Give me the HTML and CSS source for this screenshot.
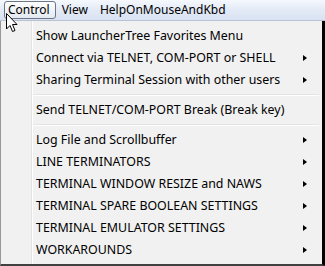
FILE: index.html
```html
<!DOCTYPE html>
<html lang="en">
<head>
    <meta charset="UTF-8">
    <title>Control menu</title>
    <link rel="stylesheet" href="styles.css">
</head>
<body>
    <div class="menubar">
        <span class="top-item active">Control</span>
        <span class="top-item">View</span>
        <span class="top-item">HelpOnMouseAndKbd</span>
    </div>
    <div class="menu">
        <div class="item">Show LauncherTree Favorites Menu</div>
        <div class="item sub">Connect via TELNET, COM-PORT or SHELL</div>
        <div class="item sub">Sharing Terminal Session with other users</div>
        <div class="sep"></div>
        <div class="item">Send TELNET/COM-PORT Break (Break key)</div>
        <div class="sep"></div>
        <div class="item sub">Log File and Scrollbuffer</div>
        <div class="item sub">LINE TERMINATORS</div>
        <div class="item sub">TERMINAL WINDOW RESIZE and NAWS</div>
        <div class="item sub">TERMINAL SPARE BOOLEAN SETTINGS</div>
        <div class="item sub">TERMINAL EMULATOR SETTINGS</div>
        <div class="item sub">WORKAROUNDS</div>
    </div>
    <svg class="cursor" width="12" height="20" viewBox="0 0 12 20">
        <path d="M0.5 0.5 L0.5 16 L4 12.5 L6.5 18.5 L9 17.5 L6.5 11.5 L11 11.5 Z" fill="#fff" stroke="#000" stroke-width="1"/>
    </svg>
</body>
</html>
```

FILE: styles.css
```css
* {
    margin: 0;
    padding: 0;
    box-sizing: border-box;
}

body {
    font-family: "Noto Sans", "Open Sans", sans-serif;
    font-size: 12px;
    color: #000;
    background-color: #f0f0f0;
    width: 325px;
    height: 266px;
    overflow: hidden;
    position: relative;
}

.menubar {
    height: 21px;
    display: flex;
    align-items: center;
    padding-left: 4px;
    gap: 2px;
    background: linear-gradient(#f5f8fd, #e3eaf6 50%, #d9e2f3);
    border-bottom: 1px solid #b9c2d3;
}

.top-item {
    height: 18px;
    line-height: 16px;
    padding: 0 5px 0 3px;
    border: 1px solid transparent;
    border-radius: 3px;
}

.top-item.active {
    border-color: #6b7686;
    background: linear-gradient(#fdfdfe, #e4e9f1);
}

.menu {
    height: 245px;
    width: 325px;
    padding: 4px 3px 2px 3px;
    font-size: 12.4px;
    background: linear-gradient(90deg, #f1f1f1 30px, #e2e3e3 30px, #e2e3e3 31px, #fff 31px, #fff 32px, #f1f1f1 32px);
    border-left: 1px solid #979797;
    border-bottom: 2px solid #404040;
    border-right: 3px solid #000;
}

.item {
    height: 22px;
    line-height: 22px;
    padding-left: 32px;
    position: relative;
}

.item.sub::after {
    content: "";
    position: absolute;
    right: 12px;
    top: 8px;
    border-left: 4px solid #000;
    border-top: 3.5px solid transparent;
    border-bottom: 3.5px solid transparent;
}

.sep {
    height: 8px;
    margin-left: 29px;
    background: linear-gradient(#f1f1f1 3px, #e2e3e3 3px, #e2e3e3 4px, #fff 4px, #fff 5px, #f1f1f1 5px);
}

.cursor {
    position: absolute;
    left: 6px;
    top: 13px;
}
```
